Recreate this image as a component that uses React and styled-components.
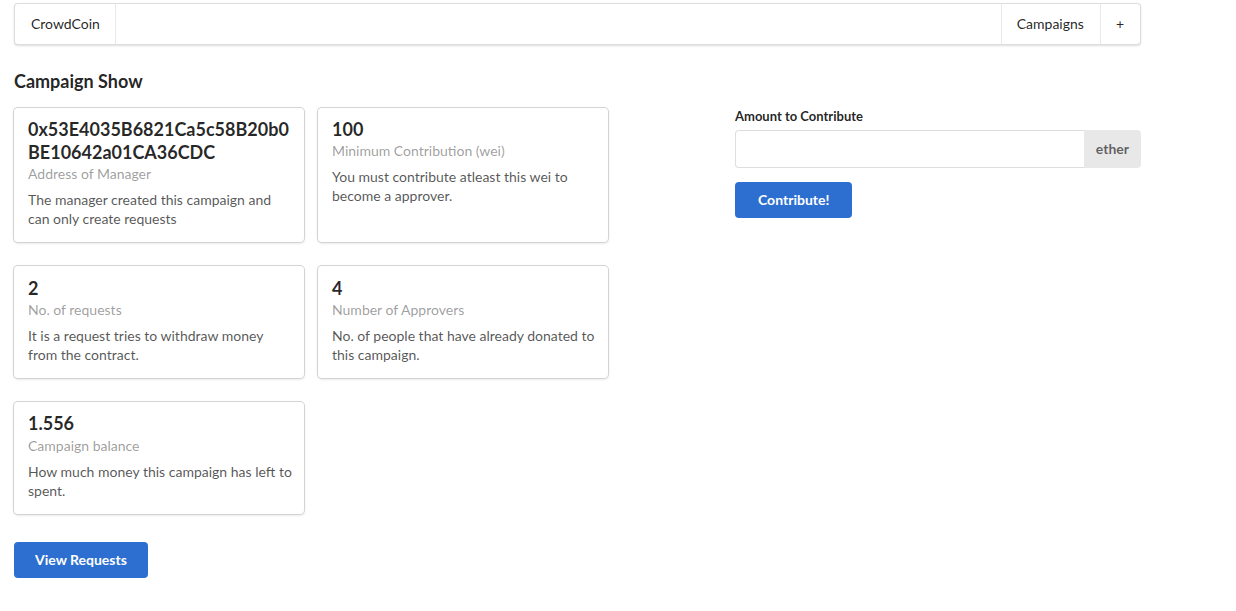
import React from "react";
import styled, { createGlobalStyle } from "styled-components";

const Global = createGlobalStyle`
  html, body { margin: 0; padding: 0; background: #fff; }
  body {
    font-family: Lato, "Helvetica Neue", Arial, sans-serif;
    font-size: 14px;
    line-height: 1.4285em;
    color: rgba(0,0,0,.87);
  }
  * { box-sizing: border-box; }
`;

const Container = styled.div`
  width: 1127px;
  margin-left: 14px;
  padding-top: 3px;
`;

const Menu = styled.nav`
  display: flex;
  min-height: 42px;
  border: 1px solid rgba(34,36,38,.15);
  border-radius: 4px;
  box-shadow: 0 1px 2px 0 rgba(34,36,38,.15);
  background: #fff;
`;

const MenuItem = styled.a`
  position: relative;
  display: flex;
  align-items: center;
  padding: 13px 16px;
  line-height: 14px;
  font-size: 14px;
  color: rgba(0,0,0,.87);
  cursor: pointer;
  &::before {
    content: "";
    position: absolute;
    top: 0;
    ${(p) => (p.$right ? "left: 0;" : "right: 0;")}
    width: 1px;
    height: 100%;
    background: rgba(34,36,38,.1);
  }
`;

const RightMenu = styled.div`
  display: flex;
  margin-left: auto;
`;

const Title = styled.h3`
  font-size: 18px;
  line-height: 23.14px;
  font-weight: 700;
  margin: 25.4px 0 14px;
  color: rgba(0,0,0,.87);
`;

const Grid = styled.div`
  display: grid;
  grid-template-columns: 1fr 406px;
  column-gap: 28px;
  row-gap: 28px;
`;

const Cards = styled.div`
  display: flex;
  flex-wrap: wrap;
  column-gap: 14px;
  row-gap: 24px;
`;

const Card = styled.div`
  width: 290px;
  background: #fff;
  border-radius: 4px;
  box-shadow: 0 1px 3px 0 #d4d4d5, 0 0 0 1px #d4d4d5;
  padding: 14px 9px 14px 14px;
`;

const CardHeader = styled.div`
  font-size: 18px;
  font-weight: 700;
  line-height: 23.14px;
  margin-top: -3.86px;
  color: rgba(0,0,0,.85);
  overflow-wrap: anywhere;
`;

const Meta = styled.div`
  font-size: 14px;
  line-height: 20.5px;
  color: rgba(0,0,0,.4);
`;

const Description = styled.div`
  margin-top: 6px;
  line-height: 19px;
  color: rgba(0,0,0,.68);
`;

const Form = styled.form`
  display: flex;
  flex-direction: column;
  align-items: flex-start;
`;

const Label = styled.label`
  display: block;
  font-size: 13px;
  font-weight: 700;
  line-height: 17px;
  margin-bottom: 5px;
  color: rgba(0,0,0,.87);
`;

const InputWrap = styled.div`
  display: flex;
  width: 100%;
  margin-bottom: 14px;
`;

const Input = styled.input`
  flex: 1;
  min-width: 0;
  height: 38px;
  padding: 9.5px 14px;
  font-family: inherit;
  font-size: 14px;
  line-height: 17px;
  border: 1px solid rgba(34,36,38,.15);
  border-right: none;
  border-radius: 4px 0 0 4px;
  outline: none;
  color: rgba(0,0,0,.87);
`;

const InputLabel = styled.div`
  display: flex;
  align-items: center;
  padding: 0 12px;
  background: #e8e8e8;
  color: rgba(0,0,0,.6);
  font-weight: 700;
  font-size: 14px;
  border-radius: 0 4px 4px 0;
`;

const Button = styled.button`
  font-family: Lato, "Helvetica Neue", Arial, sans-serif;
  font-size: 14px;
  font-weight: 700;
  line-height: 14px;
  padding: 11px ${(p) => p.$padX || 21}px;
  border: none;
  border-radius: 4px;
  background: #2c6fd1;
  color: #fff;
  cursor: pointer;
`;

const data = [
  {
    header: "0x53E4035B6821Ca5c58B20b0BE10642a01CA36CDC",
    meta: "Address of Manager",
    description: "The manager created this campaign and can only create requests",
  },
  {
    header: "100",
    meta: "Minimum Contribution (wei)",
    description: "You must contribute atleast this wei to become a approver.",
  },
  {
    header: "2",
    meta: "No. of requests",
    description: "It is a request tries to withdraw money from the contract.",
  },
  {
    header: "4",
    meta: "Number of Approvers",
    description: "No. of people that have already donated to this campaign.",
  },
  {
    header: "1.556",
    meta: "Campaign balance",
    description: "How much money this campaign has left to spent.",
  },
];

export default function App() {
  return (
    <>
      <Global />
      <Container>
        <Menu>
          <MenuItem>CrowdCoin</MenuItem>
          <RightMenu>
            <MenuItem $right>Campaigns</MenuItem>
            <MenuItem $right>+</MenuItem>
          </RightMenu>
        </Menu>
        <Title>Campaign Show</Title>
        <Grid>
          <Cards>
            {data.map((c) => (
              <Card key={c.meta}>
                <CardHeader>{c.header}</CardHeader>
                <Meta>{c.meta}</Meta>
                <Description>{c.description}</Description>
              </Card>
            ))}
          </Cards>
          <Form onSubmit={(e) => e.preventDefault()}>
            <Label>Amount to Contribute</Label>
            <InputWrap>
              <Input />
              <InputLabel>ether</InputLabel>
            </InputWrap>
            <Button type="submit" $padX={23}>Contribute!</Button>
          </Form>
          <div>
            <Button>View Requests</Button>
          </div>
        </Grid>
      </Container>
    </>
  );
}
